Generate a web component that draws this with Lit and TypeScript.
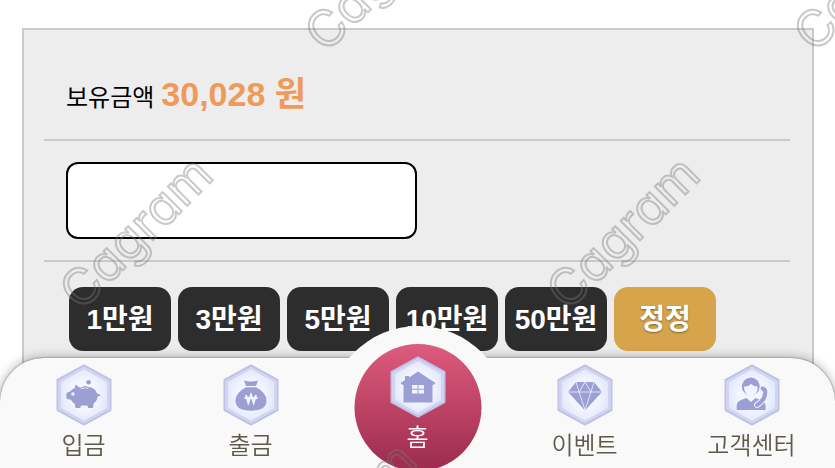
import { LitElement, html, css, svg } from "lit";
import { customElement, property } from "lit/decorators.js";
import { classMap } from "lit/directives/class-map.js";
import { styleMap } from "lit/directives/style-map.js";

const glyphs: Record<string, unknown> = {
  deposit: svg`
    <circle cx="32.6" cy="18.3" r="2.3" />
    <path d="M25.500 24q3.500-3.400 6.500-.8l-1.600 2.400h-4z" />
    <path d="M19.500 20.500l4.500 3.300q4-1.500 9-.7 6.500 1 8.200 6.600l1.900.4q1.300.3 1.200 2l-2.700.4q-.4 4.300-3.900 7.100l-.7 4.400h-4.800l-.8-2.400h-6.200l-1 2.400h-4.600l-1.100-4.600q-2.400-1.200-3.600-3.700l-4-.8q-1.400-4 .2-6.500l3.100-.8q.9-2.200 4.500-3.700z" />
    <path class="facet" d="M25 24.800q3.800-1.300 7.500-.6" />
    <circle class="cut" cx="17" cy="30" r="1.700" />`,
  withdraw: svg`
    <path d="M21 16.500q6.500 2 14 0l-2 5.500h-10z" />
    <path d="M23 23.300h10q10.500 5.500 10.500 13.200 0 10.200-15.500 10.200t-15.500-10.200q0-7.700 10.500-13.200z" />
    <path class="cutline" d="M23 31l2.300 7.500 2.700-7.500 2.700 7.500 2.300-7.500M21.500 34h13" />`,
  home: svg`
    <path d="M28 15.500l17.500 11.500-2 2-1-.5v18h-29v-18l-1 .5-2-2 4.500-3v-4h4v1.500z" />
    <path class="cut" d="M22 29h5.500v3.800h-5.500zM28.500 29h5.500v3.800h-5.500zM22 33.700h5.500v3.800h-5.500zM28.500 33.700h5.500v3.800h-5.500z" />`,
  event: svg`
    <path d="M19 18h18l8 10-17 18.500-17-18.500z" />
    <path class="facet" d="M11 28h34M19 18l3 10 6-10 6 10 3-10M22 28l6 18 6-18" />`,
  support: svg`
    <path d="M12.700 46v-4.500q.3-4 4.300-5.500l5.500-2 4.500 4 4.500-4 5.500 2q4.300 1.500 4.500 5.500v4.500z" />
    <circle cx="26.800" cy="22.500" r="9" />
    <path class="cut" d="M20 22.500q4 .3 7-2.500 3 2.500 6.700 2.500.3 8.500-6.900 9.500-6.800-1-6.800-9.500z" />
    <path class="halo" d="M38.500 24.500q3 1 2.800 4-.4 5.500-4.300 9.500l-4 3" />
    <path class="phone" d="M38.500 24.500q3 1 2.800 4-.4 5.500-4.300 9.500l-4 3" />`,
};

@customElement("hex-icon")
class HexIcon extends LitElement {
  static styles = css`
    :host {
      display: block;
    }
    svg {
      display: block;
      width: 56px;
      height: 62px;
    }
    .edge {
      stroke: #bfc2e4;
      stroke-width: 2;
      stroke-linejoin: round;
    }
    .bevel {
      fill: none;
      stroke: #d0d4f1;
      stroke-width: 2;
    }
    .glyph {
      fill: #9b9fd4;
    }
    .cut {
      fill: #f2f4ff;
    }
    .cutline {
      fill: none;
      stroke: #f2f4ff;
      stroke-width: 2;
    }
    .facet {
      fill: none;
      stroke: #dfe2f8;
      stroke-width: 1;
    }
    .halo,
    .phone {
      fill: none;
      stroke: #eef0ff;
      stroke-width: 6;
      stroke-linecap: round;
    }
    .phone {
      stroke: #9b9fd4;
      stroke-width: 4;
    }
  `;

  @property() name = "home";

  render() {
    return html`<svg viewBox="0 0 56 62" aria-hidden="true">
      <defs>
        <radialGradient id="face">
          <stop offset="0.5" stop-color="#f3f6ff" />
          <stop offset="1" stop-color="#dfe4fa" />
        </radialGradient>
      </defs>
      <path class="edge" fill="url(#face)" d="M28 1.500l26.500 14.500v30l-26.500 14.500-26.500-14.500v-30z" />
      <path class="bevel" d="M28 4.200l24 13.200v27.200l-24 13.200-24-13.200v-27.200z" />
      <g class="glyph">${glyphs[this.name]}</g>
    </svg>`;
  }
}

const amounts = ["1만원", "3만원", "5만원", "10만원", "50만원"];

const menu = [
  { icon: "deposit", label: "입금" },
  { icon: "withdraw", label: "출금" },
  { icon: "home", label: "홈" },
  { icon: "event", label: "이벤트" },
  { icon: "support", label: "고객센터" },
];

const marks = [
  { x: -158, y: 59 },
  { x: 331, y: 59 },
  { x: 820, y: 59 },
  { x: 86, y: 317 },
  { x: 573, y: 317 },
  { x: 290, y: 603 },
];

@customElement("app-root")
class AppRoot extends LitElement {
  static styles = css`
    :host {
      display: flex;
      flex-direction: column;
      box-sizing: border-box;
      min-height: 100vh;
      padding: 28px 21px 0 22px;
      background: #fff;
      font-family: "Liberation Sans", "Noto Sans CJK KR", sans-serif;
      color: #000;
    }
    .panel {
      flex: 1;
      padding: 0 22px 112px 20px;
      border: 2px solid #cacaca;
      border-bottom: 0;
      background: #ededed;
    }
    .row {
      padding: 21px 22px;
      border-bottom: 2px solid #cacaca;
    }
    .balance {
      display: flex;
      align-items: baseline;
      gap: 7px;
      padding: 44px 22px 21px;
      font-size: 24px;
      line-height: 40px;
    }
    .balance strong {
      font-size: 34px;
      color: #ef9a58;
    }
    .amount {
      display: block;
      box-sizing: border-box;
      width: 50%;
      height: 77px;
      padding: 0 16px;
      border: 2px solid #000;
      border-radius: 12px;
      background: #fff;
      font: inherit;
      font-size: 28px;
    }
    .picks {
      display: flex;
      flex-wrap: wrap;
      gap: 7px;
      padding: 25px 25px 0;
    }
    .picks button {
      width: 102px;
      height: 64px;
      padding: 0 0 4px;
      border: 0;
      border-radius: 14px;
      background: #2d2d2d;
      color: #fff;
      font: inherit;
      font-size: 28px;
      font-weight: bold;
      white-space: nowrap;
    }
    .picks .reset {
      background: #d6a44b;
      text-shadow: 0 1px 2px #80602c;
    }
    nav {
      position: fixed;
      inset: auto 0 0;
      height: 110px;
      border-radius: 44px 44px 0 0;
      background: #f9f9f9;
      box-shadow: 0 0 12px #0005, 0 0 2px #0008;
    }
    .bump {
      position: absolute;
      top: -32px;
      left: 50%;
      width: 180px;
      height: 142px;
      overflow: hidden;
      transform: translateX(-50%);
    }
    .bump::before {
      content: "";
      display: block;
      height: 180px;
      border-radius: 50%;
      background: #f9f9f9;
    }
    .bump::after {
      content: "";
      position: absolute;
      top: 18px;
      left: 50%;
      width: 127px;
      height: 127px;
      border-radius: 50%;
      background: linear-gradient(#de5b7c, #9b2b4f);
      transform: translateX(-50%);
    }
    ul {
      position: relative;
      display: grid;
      grid-template-columns: repeat(5, 1fr);
      height: 110px;
      margin: 0;
      padding: 0;
      list-style: none;
    }
    a {
      display: flex;
      flex-direction: column;
      align-items: center;
      gap: 5px;
      padding-top: 6px;
      color: #5f594b;
      font-size: 24px;
      font-weight: 350;
      line-height: 30px;
      text-decoration: none;
      white-space: nowrap;
    }
    .current {
      margin-top: -8px;
      color: #fff;
    }
    .marks {
      position: fixed;
      inset: 0;
      overflow: hidden;
      pointer-events: none;
    }
    .mark {
      position: absolute;
      font: 400 50px/1 Inter, sans-serif;
      font-feature-settings: "cv11";
      white-space: nowrap;
      transform-origin: 0 100%;
      transform: rotate(-45deg);
      color: transparent;
      -webkit-text-stroke: 2px #787878;
      opacity: 0.4;
    }
  `;

  render() {
    return html`
      <main class="panel">
        <div class="row balance">
          <span>보유금액</span><strong>30,028 원</strong>
        </div>
        <div class="row">
          <input class="amount" type="text" inputmode="numeric" aria-label="금액" />
        </div>
        <div class="picks">
          ${amounts.map((a) => html`<button type="button">${a}</button>`)}
          <button type="button" class="reset">정정</button>
        </div>
      </main>
      <nav>
        <div class="bump"></div>
        <ul>
          ${menu.map(
            (m) => html`<li>
              <a href="#${m.icon}" class=${classMap({ current: m.icon === "home" })}>
                <hex-icon name=${m.icon}></hex-icon>
                <span>${m.label}</span>
              </a>
            </li>`
          )}
        </ul>
      </nav>
      <div class="marks" aria-hidden="true">
        ${marks.map(
          (p) => html`<span class="mark" style=${styleMap({ left: `${p.x}px`, bottom: `calc(100% - ${p.y}px)` })}>Cagram</span>`
        )}
      </div>
    `;
  }
}
